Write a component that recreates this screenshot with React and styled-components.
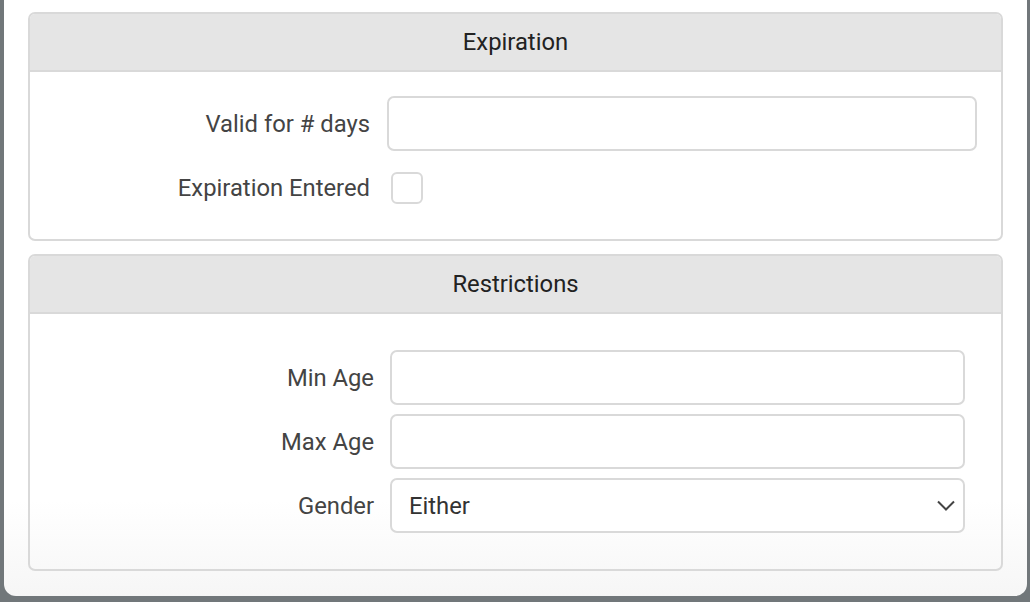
import styled, { createGlobalStyle } from 'styled-components';

const GlobalStyle = createGlobalStyle`
  html, body {
    margin: 0;
    padding: 0;
    background: #71777a;
    font-family: Roboto, "Liberation Sans", sans-serif;
  }
`;

const Modal = styled.div`
  box-sizing: border-box;
  margin-left: 4px;
  width: 1023px;
  height: 596px;
  padding: 12px 24px 0;
  border-radius: 0 0 12px 12px;
  background: linear-gradient(to bottom, #ffffff 0%, #ffffff 84%, #f6f6f6 100%);
  display: flex;
  flex-direction: column;
  gap: 13px;
`;

const Card = styled.section`
  border: 2px solid #d9d9d9;
  border-radius: 7px;
  overflow: hidden;
  background: transparent;
`;

const CardHeader = styled.div`
  height: 56px;
  background: #e5e5e5;
  border-bottom: 2px solid #d9d9d9;
  display: flex;
  align-items: center;
  justify-content: center;
  font-size: 23.8px;
  color: #222;
`;

const CardBody = styled.div`
  display: grid;
  grid-template-columns: ${(p) => p.$labelWidth}px 1fr;
  column-gap: ${(p) => p.$gap}px;
  row-gap: 9px;
  align-items: center;
  padding: ${(p) => p.$padTop}px ${(p) => p.$padRight}px ${(p) => p.$padBottom}px 0;
`;

const Label = styled.label`
  text-align: right;
  font-size: 23.8px;
  color: #444;
`;

const Input = styled.input`
  box-sizing: border-box;
  height: 55px;
  width: 100%;
  border: 2px solid #d9d9d9;
  border-radius: 7px;
  padding: 0 16px;
  font-size: 23.8px;
  font-family: inherit;
  background: #fff;
  outline: none;
`;

const CheckRow = styled.div`
  height: 55px;
  display: flex;
  align-items: center;
`;

const Checkbox = styled.span`
  box-sizing: border-box;
  display: block;
  width: 32px;
  height: 32px;
  margin-left: 4px;
  border: 2px solid #d9d9d9;
  border-radius: 6px;
  background: #fff;
`;

const SelectBox = styled.div`
  box-sizing: border-box;
  height: 55px;
  border: 2px solid #d9d9d9;
  border-radius: 7px;
  background: #fff;
  padding: 0 8px 0 17px;
  display: flex;
  align-items: center;
  justify-content: space-between;
  font-size: 23.8px;
  color: #333;
`;

const Chevron = () => (
  <svg width="18" height="11" viewBox="0 0 18 11" fill="none">
    <path d="M1 1.5 L9 9.5 L17 1.5" stroke="#444" strokeWidth="2" />
  </svg>
);

export default function App() {
  return (
    <>
      <GlobalStyle />
      <Modal>
        <Card>
          <CardHeader>Expiration</CardHeader>
          <CardBody $labelWidth={340} $gap={17} $padTop={24} $padRight={24} $padBottom={24}>
            <Label>Valid for # days</Label>
            <Input type="text" />
            <Label>Expiration Entered</Label>
            <CheckRow>
              <Checkbox />
            </CheckRow>
          </CardBody>
        </Card>
        <Card>
          <CardHeader>Restrictions</CardHeader>
          <CardBody $labelWidth={344} $gap={16} $padTop={36} $padRight={36} $padBottom={36}>
            <Label>Min Age</Label>
            <Input type="text" />
            <Label>Max Age</Label>
            <Input type="text" />
            <Label>Gender</Label>
            <SelectBox>
              <span>Either</span>
              <Chevron />
            </SelectBox>
          </CardBody>
        </Card>
      </Modal>
    </>
  );
}
